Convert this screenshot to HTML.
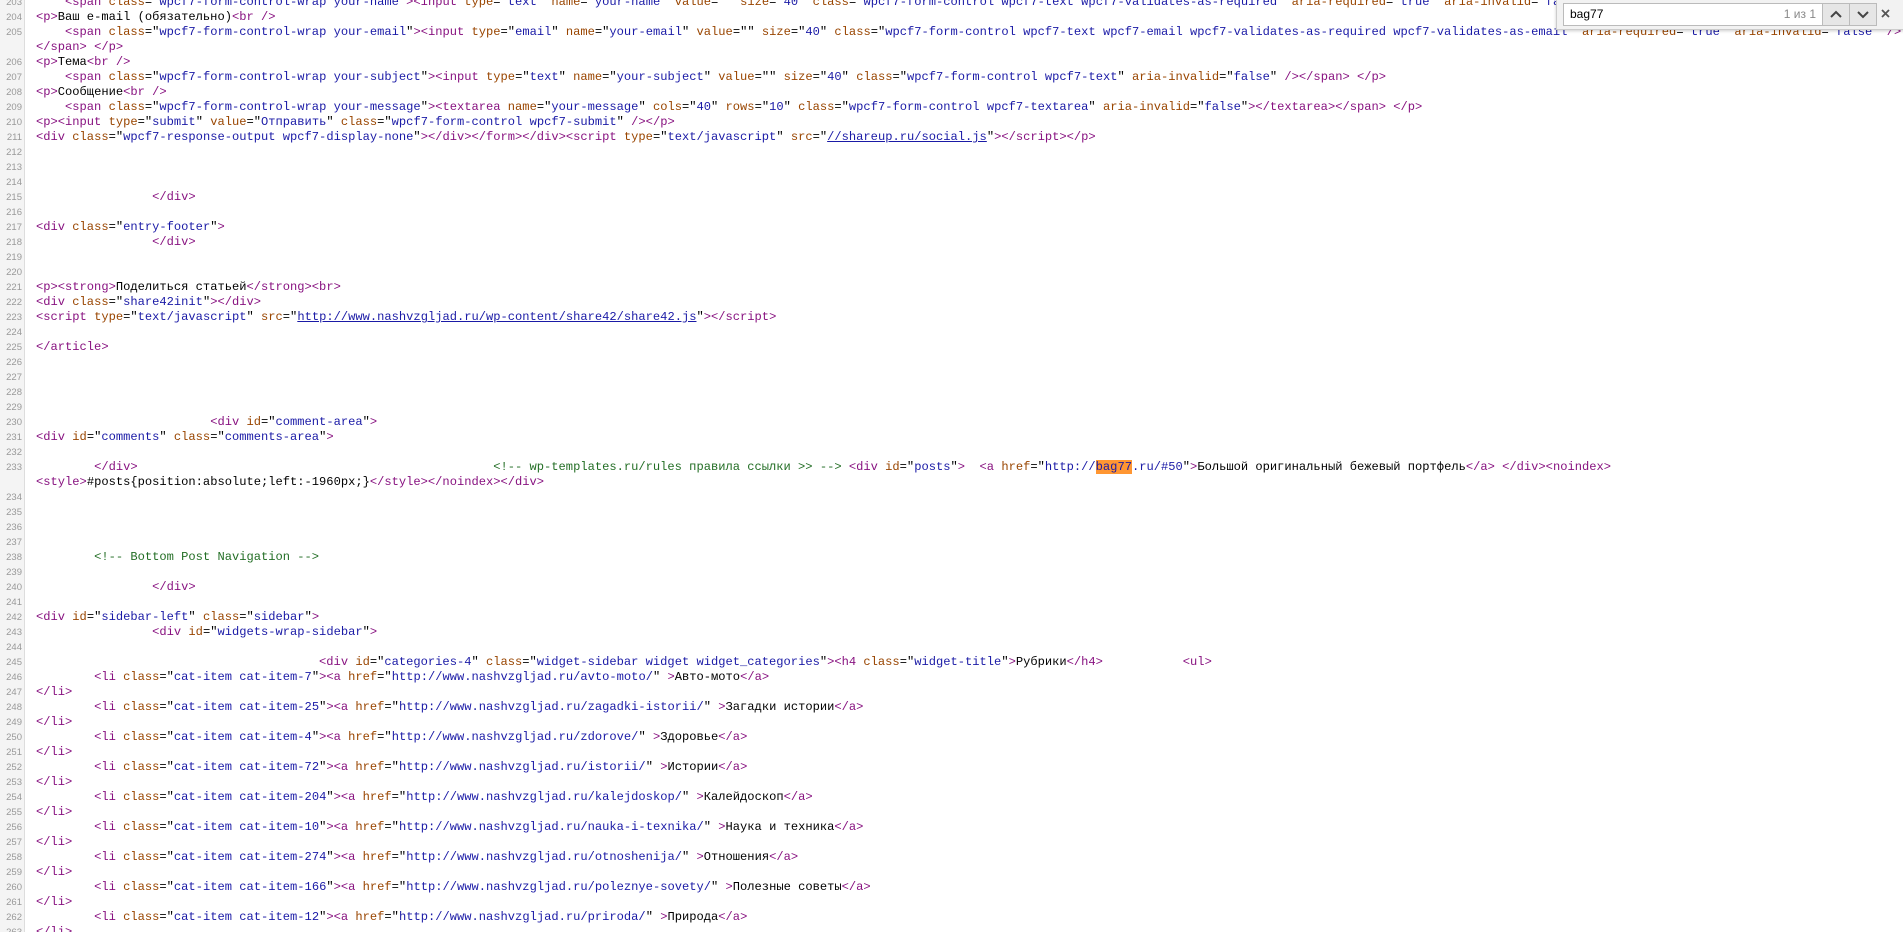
<!DOCTYPE html>
<html style="overflow:hidden;height:932px"><head><meta charset="utf-8"><style>
body{margin:0;width:1903px;height:932px;overflow:hidden;background:#fff;position:relative;font-family:"Liberation Mono",monospace;font-size:12.1px;}
#g{position:absolute;left:0;top:0;width:24px;height:932px;background:#f4f4f4;border-right:1px solid #ddd;}
#c{position:absolute;left:0;top:-5px;}
.r{height:15px;line-height:15px;white-space:pre;position:relative;}
.n{position:absolute;left:0;width:22px;text-align:right;color:#999;font-family:"Liberation Sans",sans-serif;font-size:9.5px;}
.x{position:absolute;left:36px;color:#000;font-family:"Liberation Mono","Noto Sans CJK SC",monospace;}
.t{color:#881280}.a{color:#994500}.v{color:#1a1aa6}.c{color:#236e25}
.l{color:#1a1aa6;text-decoration:underline}
.h{background:#ff9632}
#f{position:absolute;left:1556px;top:0;width:347px;height:29px;background:#f2f2f2;border:1px solid #ccc;border-top:none;box-shadow:0 1px 3px rgba(0,0,0,.2);font-family:"Liberation Sans",sans-serif;}
#fi{position:absolute;left:6px;top:3px;width:258px;height:21px;background:#fff;border:1px solid #bbb;}
</style></head><body>
<div id="g"></div>
<div id="c">
<div class="r"><span class="n">203</span><span class="x">    <span class="t">&lt;span</span> <span class="a">class</span>="<span class="v">wpcf7-form-control-wrap your-name</span>"<span class="t">&gt;&lt;input</span> <span class="a">type</span>="<span class="v">text</span>" <span class="a">name</span>="<span class="v">your-name</span>" <span class="a">value</span>="" <span class="a">size</span>="<span class="v">40</span>" <span class="a">class</span>="<span class="v">wpcf7-form-control wpcf7-text wpcf7-validates-as-required</span>" <span class="a">aria-required</span>="<span class="v">true</span>" <span class="a">aria-invalid</span>="<span class="v">false</span>" <span class="t">/&gt;</span></span></div>
<div class="r"><span class="n">204</span><span class="x"><span class="t">&lt;p&gt;</span>Ваш e-mail (обязательно)<span class="t">&lt;br /&gt;</span></span></div>
<div class="r"><span class="n">205</span><span class="x">    <span class="t">&lt;span</span> <span class="a">class</span>="<span class="v">wpcf7-form-control-wrap your-email</span>"<span class="t">&gt;&lt;input</span> <span class="a">type</span>="<span class="v">email</span>" <span class="a">name</span>="<span class="v">your-email</span>" <span class="a">value</span>="" <span class="a">size</span>="<span class="v">40</span>" <span class="a">class</span>="<span class="v">wpcf7-form-control wpcf7-text wpcf7-email wpcf7-validates-as-required wpcf7-validates-as-email</span>" <span class="a">aria-required</span>="<span class="v">true</span>" <span class="a">aria-invalid</span>="<span class="v">false</span>" <span class="t">/&gt;</span></span></div>
<div class="r"><span class="x"><span class="t">&lt;/span&gt;</span> <span class="t">&lt;/p&gt;</span></span></div>
<div class="r"><span class="n">206</span><span class="x"><span class="t">&lt;p&gt;</span>Тема<span class="t">&lt;br /&gt;</span></span></div>
<div class="r"><span class="n">207</span><span class="x">    <span class="t">&lt;span</span> <span class="a">class</span>="<span class="v">wpcf7-form-control-wrap your-subject</span>"<span class="t">&gt;&lt;input</span> <span class="a">type</span>="<span class="v">text</span>" <span class="a">name</span>="<span class="v">your-subject</span>" <span class="a">value</span>="" <span class="a">size</span>="<span class="v">40</span>" <span class="a">class</span>="<span class="v">wpcf7-form-control wpcf7-text</span>" <span class="a">aria-invalid</span>="<span class="v">false</span>" <span class="t">/&gt;&lt;/span&gt;</span> <span class="t">&lt;/p&gt;</span></span></div>
<div class="r"><span class="n">208</span><span class="x"><span class="t">&lt;p&gt;</span>Сообщение<span class="t">&lt;br /&gt;</span></span></div>
<div class="r"><span class="n">209</span><span class="x">    <span class="t">&lt;span</span> <span class="a">class</span>="<span class="v">wpcf7-form-control-wrap your-message</span>"<span class="t">&gt;&lt;textarea</span> <span class="a">name</span>="<span class="v">your-message</span>" <span class="a">cols</span>="<span class="v">40</span>" <span class="a">rows</span>="<span class="v">10</span>" <span class="a">class</span>="<span class="v">wpcf7-form-control wpcf7-textarea</span>" <span class="a">aria-invalid</span>="<span class="v">false</span>"<span class="t">&gt;&lt;/textarea&gt;&lt;/span&gt;</span> <span class="t">&lt;/p&gt;</span></span></div>
<div class="r"><span class="n">210</span><span class="x"><span class="t">&lt;p&gt;&lt;input</span> <span class="a">type</span>="<span class="v">submit</span>" <span class="a">value</span>="<span class="v">Отправить</span>" <span class="a">class</span>="<span class="v">wpcf7-form-control wpcf7-submit</span>" <span class="t">/&gt;&lt;/p&gt;</span></span></div>
<div class="r"><span class="n">211</span><span class="x"><span class="t">&lt;div</span> <span class="a">class</span>="<span class="v">wpcf7-response-output wpcf7-display-none</span>"<span class="t">&gt;&lt;/div&gt;&lt;/form&gt;&lt;/div&gt;&lt;script</span> <span class="a">type</span>="<span class="v">text/javascript</span>" <span class="a">src</span>="<span class="l">//shareup.ru/social.js</span>"<span class="t">&gt;&lt;/script&gt;&lt;/p&gt;</span></span></div>
<div class="r"><span class="n">212</span></div>
<div class="r"><span class="n">213</span></div>
<div class="r"><span class="n">214</span></div>
<div class="r"><span class="n">215</span><span class="x">                <span class="t">&lt;/div&gt;</span></span></div>
<div class="r"><span class="n">216</span></div>
<div class="r"><span class="n">217</span><span class="x"><span class="t">&lt;div</span> <span class="a">class</span>="<span class="v">entry-footer</span>"<span class="t">&gt;</span></span></div>
<div class="r"><span class="n">218</span><span class="x">                <span class="t">&lt;/div&gt;</span></span></div>
<div class="r"><span class="n">219</span></div>
<div class="r"><span class="n">220</span></div>
<div class="r"><span class="n">221</span><span class="x"><span class="t">&lt;p&gt;&lt;strong&gt;</span>Поделиться статьей<span class="t">&lt;/strong&gt;&lt;br&gt;</span></span></div>
<div class="r"><span class="n">222</span><span class="x"><span class="t">&lt;div</span> <span class="a">class</span>="<span class="v">share42init</span>"<span class="t">&gt;&lt;/div&gt;</span></span></div>
<div class="r"><span class="n">223</span><span class="x"><span class="t">&lt;script</span> <span class="a">type</span>="<span class="v">text/javascript</span>" <span class="a">src</span>="<span class="l">http://www.nashvzgljad.ru/wp-content/share42/share42.js</span>"<span class="t">&gt;&lt;/script&gt;</span></span></div>
<div class="r"><span class="n">224</span></div>
<div class="r"><span class="n">225</span><span class="x"><span class="t">&lt;/article&gt;</span></span></div>
<div class="r"><span class="n">226</span></div>
<div class="r"><span class="n">227</span></div>
<div class="r"><span class="n">228</span></div>
<div class="r"><span class="n">229</span></div>
<div class="r"><span class="n">230</span><span class="x">                        <span class="t">&lt;div</span> <span class="a">id</span>="<span class="v">comment-area</span>"<span class="t">&gt;</span></span></div>
<div class="r"><span class="n">231</span><span class="x"><span class="t">&lt;div</span> <span class="a">id</span>="<span class="v">comments</span>" <span class="a">class</span>="<span class="v">comments-area</span>"<span class="t">&gt;</span></span></div>
<div class="r"><span class="n">232</span></div>
<div class="r"><span class="n">233</span><span class="x">        <span class="t">&lt;/div&gt;</span>                                                 <span class="c">&lt;!-- wp-templates.ru/rules правила ссылки &gt;&gt; --&gt;</span> <span class="t">&lt;div</span> <span class="a">id</span>="<span class="v">posts</span>"<span class="t">&gt;</span>  <span class="t">&lt;a</span> <span class="a">href</span>="<span class="v">http://<span class="h">bag77</span>.ru/#50</span>"<span class="t">&gt;</span>Большой оригинальный бежевый портфель<span class="t">&lt;/a&gt;</span> <span class="t">&lt;/div&gt;&lt;noindex&gt;</span></span></div>
<div class="r"><span class="x"><span class="t">&lt;style&gt;</span>#posts{position:absolute;left:-1960px;}<span class="t">&lt;/style&gt;&lt;/noindex&gt;&lt;/div&gt;</span></span></div>
<div class="r"><span class="n">234</span></div>
<div class="r"><span class="n">235</span></div>
<div class="r"><span class="n">236</span></div>
<div class="r"><span class="n">237</span></div>
<div class="r"><span class="n">238</span><span class="x">        <span class="c">&lt;!-- Bottom Post Navigation --&gt;</span></span></div>
<div class="r"><span class="n">239</span></div>
<div class="r"><span class="n">240</span><span class="x">                <span class="t">&lt;/div&gt;</span></span></div>
<div class="r"><span class="n">241</span></div>
<div class="r"><span class="n">242</span><span class="x"><span class="t">&lt;div</span> <span class="a">id</span>="<span class="v">sidebar-left</span>" <span class="a">class</span>="<span class="v">sidebar</span>"<span class="t">&gt;</span></span></div>
<div class="r"><span class="n">243</span><span class="x">                <span class="t">&lt;div</span> <span class="a">id</span>="<span class="v">widgets-wrap-sidebar</span>"<span class="t">&gt;</span></span></div>
<div class="r"><span class="n">244</span></div>
<div class="r"><span class="n">245</span><span class="x">                                       <span class="t">&lt;div</span> <span class="a">id</span>="<span class="v">categories-4</span>" <span class="a">class</span>="<span class="v">widget-sidebar widget widget_categories</span>"<span class="t">&gt;&lt;h4</span> <span class="a">class</span>="<span class="v">widget-title</span>"<span class="t">&gt;</span>Рубрики<span class="t">&lt;/h4&gt;</span>           <span class="t">&lt;ul&gt;</span></span></div>
<div class="r"><span class="n">246</span><span class="x">        <span class="t">&lt;li</span> <span class="a">class</span>="<span class="v">cat-item cat-item-7</span>"<span class="t">&gt;&lt;a</span> <span class="a">href</span>="<span class="v">http://www.nashvzgljad.ru/avto-moto/</span>" <span class="t">&gt;</span>Авто-мото<span class="t">&lt;/a&gt;</span></span></div>
<div class="r"><span class="n">247</span><span class="x"><span class="t">&lt;/li&gt;</span></span></div>
<div class="r"><span class="n">248</span><span class="x">        <span class="t">&lt;li</span> <span class="a">class</span>="<span class="v">cat-item cat-item-25</span>"<span class="t">&gt;&lt;a</span> <span class="a">href</span>="<span class="v">http://www.nashvzgljad.ru/zagadki-istorii/</span>" <span class="t">&gt;</span>Загадки истории<span class="t">&lt;/a&gt;</span></span></div>
<div class="r"><span class="n">249</span><span class="x"><span class="t">&lt;/li&gt;</span></span></div>
<div class="r"><span class="n">250</span><span class="x">        <span class="t">&lt;li</span> <span class="a">class</span>="<span class="v">cat-item cat-item-4</span>"<span class="t">&gt;&lt;a</span> <span class="a">href</span>="<span class="v">http://www.nashvzgljad.ru/zdorove/</span>" <span class="t">&gt;</span>Здоровье<span class="t">&lt;/a&gt;</span></span></div>
<div class="r"><span class="n">251</span><span class="x"><span class="t">&lt;/li&gt;</span></span></div>
<div class="r"><span class="n">252</span><span class="x">        <span class="t">&lt;li</span> <span class="a">class</span>="<span class="v">cat-item cat-item-72</span>"<span class="t">&gt;&lt;a</span> <span class="a">href</span>="<span class="v">http://www.nashvzgljad.ru/istorii/</span>" <span class="t">&gt;</span>Истории<span class="t">&lt;/a&gt;</span></span></div>
<div class="r"><span class="n">253</span><span class="x"><span class="t">&lt;/li&gt;</span></span></div>
<div class="r"><span class="n">254</span><span class="x">        <span class="t">&lt;li</span> <span class="a">class</span>="<span class="v">cat-item cat-item-204</span>"<span class="t">&gt;&lt;a</span> <span class="a">href</span>="<span class="v">http://www.nashvzgljad.ru/kalejdoskop/</span>" <span class="t">&gt;</span>Калейдоскоп<span class="t">&lt;/a&gt;</span></span></div>
<div class="r"><span class="n">255</span><span class="x"><span class="t">&lt;/li&gt;</span></span></div>
<div class="r"><span class="n">256</span><span class="x">        <span class="t">&lt;li</span> <span class="a">class</span>="<span class="v">cat-item cat-item-10</span>"<span class="t">&gt;&lt;a</span> <span class="a">href</span>="<span class="v">http://www.nashvzgljad.ru/nauka-i-texnika/</span>" <span class="t">&gt;</span>Наука и техника<span class="t">&lt;/a&gt;</span></span></div>
<div class="r"><span class="n">257</span><span class="x"><span class="t">&lt;/li&gt;</span></span></div>
<div class="r"><span class="n">258</span><span class="x">        <span class="t">&lt;li</span> <span class="a">class</span>="<span class="v">cat-item cat-item-274</span>"<span class="t">&gt;&lt;a</span> <span class="a">href</span>="<span class="v">http://www.nashvzgljad.ru/otnoshenija/</span>" <span class="t">&gt;</span>Отношения<span class="t">&lt;/a&gt;</span></span></div>
<div class="r"><span class="n">259</span><span class="x"><span class="t">&lt;/li&gt;</span></span></div>
<div class="r"><span class="n">260</span><span class="x">        <span class="t">&lt;li</span> <span class="a">class</span>="<span class="v">cat-item cat-item-166</span>"<span class="t">&gt;&lt;a</span> <span class="a">href</span>="<span class="v">http://www.nashvzgljad.ru/poleznye-sovety/</span>" <span class="t">&gt;</span>Полезные советы<span class="t">&lt;/a&gt;</span></span></div>
<div class="r"><span class="n">261</span><span class="x"><span class="t">&lt;/li&gt;</span></span></div>
<div class="r"><span class="n">262</span><span class="x">        <span class="t">&lt;li</span> <span class="a">class</span>="<span class="v">cat-item cat-item-12</span>"<span class="t">&gt;&lt;a</span> <span class="a">href</span>="<span class="v">http://www.nashvzgljad.ru/priroda/</span>" <span class="t">&gt;</span>Природа<span class="t">&lt;/a&gt;</span></span></div>
<div class="r"><span class="n">263</span><span class="x"><span class="t">&lt;/li&gt;</span></span></div>
</div>
<div id="f">
 <div id="fi"><span style="position:absolute;left:6px;top:3px;font-size:12px;color:#000">bag77</span><span style="position:absolute;right:6px;top:3px;font-size:12px;color:#888">1 из 1</span></div>
 <div style="position:absolute;left:265px;top:3px;width:26px;height:21px;border:1px solid #bbb;background:#e6e6e6;"><svg width="26" height="21"><path d="M8 13l5-5 5 5" fill="none" stroke="#444" stroke-width="2"/></svg></div>
 <div style="position:absolute;left:292px;top:3px;width:26px;height:21px;border:1px solid #bbb;background:#e6e6e6;"><svg width="26" height="21"><path d="M8 8l5 5 5-5" fill="none" stroke="#444" stroke-width="2"/></svg></div>
 <svg style="position:absolute;left:324px;top:9px" width="10" height="10"><path d="M1 1l7 7M8 1l-7 7" stroke="#555" stroke-width="1.8"/></svg>
</div>
</body></html>
